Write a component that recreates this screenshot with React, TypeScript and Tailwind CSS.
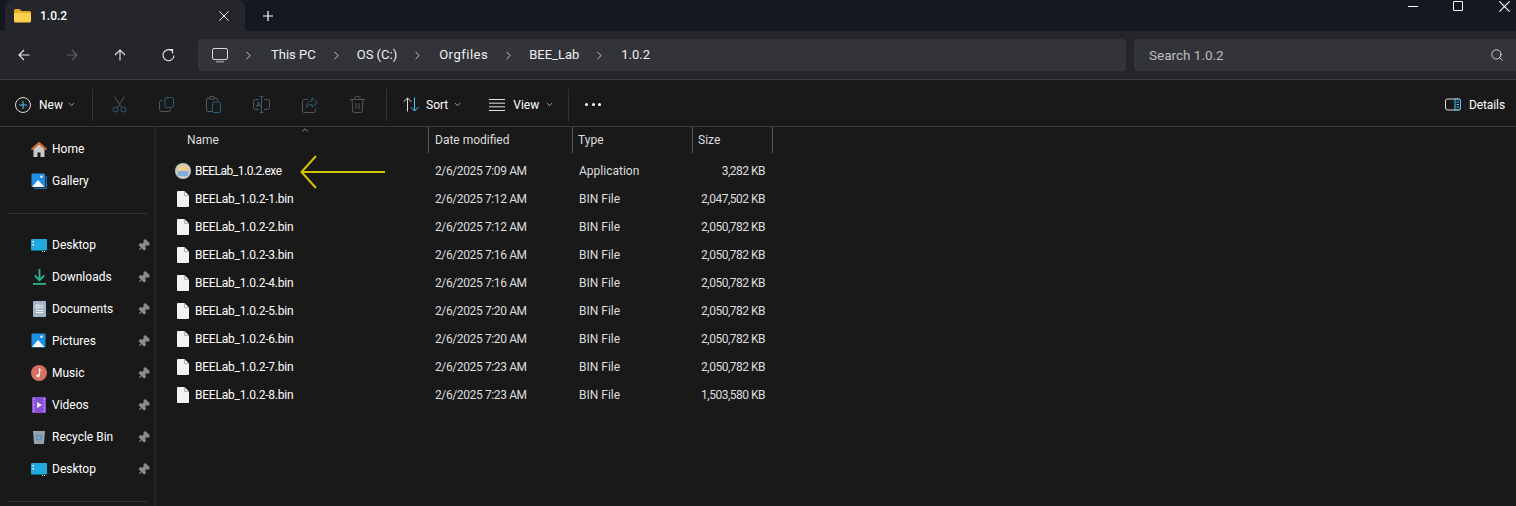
import { ChevronDown, ChevronRight, ChevronUp, Search, Pin } from 'lucide-react'

const files = [
  { name: 'BEELab_1.0.2.exe', date: '2/6/2025 7:09 AM', type: 'Application', size: '3,282 KB', exe: true },
  { name: 'BEELab_1.0.2-1.bin', date: '2/6/2025 7:12 AM', type: 'BIN File', size: '2,047,502 KB' },
  { name: 'BEELab_1.0.2-2.bin', date: '2/6/2025 7:12 AM', type: 'BIN File', size: '2,050,782 KB' },
  { name: 'BEELab_1.0.2-3.bin', date: '2/6/2025 7:16 AM', type: 'BIN File', size: '2,050,782 KB' },
  { name: 'BEELab_1.0.2-4.bin', date: '2/6/2025 7:16 AM', type: 'BIN File', size: '2,050,782 KB' },
  { name: 'BEELab_1.0.2-5.bin', date: '2/6/2025 7:20 AM', type: 'BIN File', size: '2,050,782 KB' },
  { name: 'BEELab_1.0.2-6.bin', date: '2/6/2025 7:20 AM', type: 'BIN File', size: '2,050,782 KB' },
  { name: 'BEELab_1.0.2-7.bin', date: '2/6/2025 7:23 AM', type: 'BIN File', size: '2,050,782 KB' },
  { name: 'BEELab_1.0.2-8.bin', date: '2/6/2025 7:23 AM', type: 'BIN File', size: '1,503,580 KB' },
]

const GRAY = '#55575a'
const BLUE = '#2b5f80'

function FolderIcon() {
  return (
    <svg width="17" height="15" viewBox="0 0 17 15">
      <path d="M0 2.5A1.5 1.5 0 0 1 1.5 1h4l2 2h8A1.5 1.5 0 0 1 17 4.5V6H0z" fill="#e8a922" />
      <path d="M0 5h17v8a1.500 1.500 0 0 1-1.500 1.500h-14A1.500 1.500 0 0 1 0 13z" fill="#fbd04f" />
    </svg>
  )
}

function HomeIcon() {
  return (
    <svg width="16" height="15" viewBox="0 0 16 15">
      <path d="M2.5 7 8 2l5.500 5v8h-4v-4.500h-3V15h-4z" fill="#c9c9c9" />
      <path d="M0.500 7.500 8 .8l7.500 6.700" fill="none" stroke="#d9691e" strokeWidth="1.800" />
    </svg>
  )
}

function PhotoIcon({ stack }: { stack?: boolean }) {
  return (
    <svg width="16" height="16" viewBox="0 0 16 16">
      {stack && <path d="M3 15.500h11.500a1 1 0 0 0 1-1V3" fill="none" stroke="#1f6fb8" strokeWidth="1.500" />}
      <rect x="0.500" y="0.500" width={stack ? 13.500 : 14} height={stack ? 13.500 : 14} rx="1" fill="#1e8fe0" />
      <path d="M1 14 7 7l6.500 7z" fill="#f4f7fa" />
      <circle cx="10.500" cy="3.800" r="1.200" fill="#f4f7fa" />
    </svg>
  )
}

function DesktopIcon() {
  return (
    <svg width="16" height="13" viewBox="0 0 16 13">
      <rect width="16" height="11.500" rx="1" fill="#1fa9dc" />
      <rect x="1.500" y="2" width="1.500" height="1.500" fill="#e8f6fc" />
      <rect x="1.500" y="5" width="1.500" height="1.500" fill="#e8f6fc" />
      <rect x="11" y="12" width="1" height="1" fill="#c5d9e2" />
      <rect x="13" y="12" width="1" height="1" fill="#c5d9e2" />
    </svg>
  )
}

function DownloadIcon() {
  return (
    <svg width="13" height="16" viewBox="0 0 13 16">
      <path d="M6.500 0v11M1.800 6.500l4.700 4.700 4.700-4.700" fill="none" stroke="#27b591" strokeWidth="1.800" />
      <rect y="14" width="13" height="1.800" fill="#27b591" />
    </svg>
  )
}

function DocumentsIcon() {
  return (
    <svg width="13" height="16" viewBox="0 0 13 16">
      <rect width="13" height="16" rx="1" fill="#a3b4c9" />
      <path d="M3 4h3v3H3zM7.500 4.500H10M7.500 6.500H10M3 9.500h7M3 11.500h7" stroke="#f1f4f7" fill="none" />
    </svg>
  )
}

function MusicIcon() {
  return (
    <svg width="16" height="16" viewBox="0 0 16 16">
      <circle cx="8" cy="8" r="8" fill="#d5705f" />
      <path d="M8.500 3.500v6.800" stroke="#f8ecea" strokeWidth="1.300" />
      <path d="M8.500 3.500c.4 1.300 1.400 1.700 2.200 2.200" stroke="#f8ecea" fill="none" />
      <circle cx="7" cy="10.700" r="1.800" fill="#f8ecea" />
    </svg>
  )
}

function VideosIcon() {
  return (
    <svg width="14" height="16" viewBox="0 0 14 16">
      <rect width="14" height="16" rx="1" fill="#8a4fd8" />
      <path d="M5 5v6l5-3z" fill="#efe6fb" />
      <path d="M1 2h1.500M1 5h1.500M1 8h1.500M1 11h1.500M1 14h1.500M11.500 2H13M11.500 5H13M11.500 8H13M11.500 11H13M11.500 14H13" stroke="#d9c6f5" />
    </svg>
  )
}

function RecycleIcon() {
  return (
    <svg width="12" height="14" viewBox="0 0 12 14">
      <path d="M0 1h12l-1 13H1z" fill="#9aa1a8" />
      <circle cx="6" cy="7.500" r="2.500" fill="none" stroke="#2f94d8" strokeWidth="1.500" strokeDasharray="3 1" />
    </svg>
  )
}

function BinFileIcon() {
  return (
    <svg width="12" height="16" viewBox="0 0 12 16">
      <path d="M1 0h6.500L12 4.500V15a1 1 0 0 1-1 1H1a1 1 0 0 1-1-1V1a1 1 0 0 1 1-1z" fill="#f2f2f2" />
      <path d="M7.500 0v4.500H12" fill="none" stroke="#9a9a9a" strokeWidth="0.700" />
    </svg>
  )
}

function ExeIcon() {
  return (
    <div className="w-[16px] h-[16px] rounded-full bg-[#c9c7c1] flex items-center justify-center">
      <svg width="10" height="10" viewBox="0 0 10 10">
        <rect width="10" height="5" fill="#e9cf8a" />
        <rect y="5" width="10" height="5" fill="#7fb0d9" />
      </svg>
    </div>
  )
}

function CutIcon() {
  return (
    <svg width="15" height="17" viewBox="0 0 15 17" fill="none">
      <path d="M2.500 0.500 9.500 11.500M12.500 0.500 5.500 11.500" stroke={GRAY} />
      <circle cx="3.500" cy="13.500" r="2.500" stroke={BLUE} />
      <circle cx="11.500" cy="13.500" r="2.500" stroke={BLUE} />
    </svg>
  )
}

function CopyIcon() {
  return (
    <svg width="15" height="15" viewBox="0 0 15 15" fill="none">
      <path d="M3.500 3.500h-1a2 2 0 0 0-2 2v7a2 2 0 0 0 2 2h7a2 2 0 0 0 2-2v-1" stroke={GRAY} />
      <rect x="6" y="0.500" width="8.500" height="10" rx="2" stroke={BLUE} />
    </svg>
  )
}

function PasteIcon() {
  return (
    <svg width="15" height="17" viewBox="0 0 15 17" fill="none">
      <path d="M6 15.500H2a1.500 1.500 0 0 1-1.500-1.500V3.500A1.500 1.500 0 0 1 2 2h1.500M9 2h1a1.500 1.500 0 0 1 1.500 1.500V5M3.500 3V1.500a1 1 0 0 1 1-1h3a1 1 0 0 1 1 1V3z" stroke={GRAY} />
      <rect x="6.500" y="6" width="8" height="10.500" rx="1.500" stroke={BLUE} />
    </svg>
  )
}

function RenameIcon() {
  return (
    <svg width="17" height="17" viewBox="0 0 17 17" fill="none">
      <path d="M6 3.500H2.500a2 2 0 0 0-2 2v6a2 2 0 0 0 2 2H6M11 3.500h3.500a2 2 0 0 1 2 2v6a2 2 0 0 1-2 2H11" stroke={GRAY} />
      <path d="M6.500 0.500h4M6.500 16.500h4M8.500 0.500v16" stroke={BLUE} />
      <path d="M3.500 11 5.500 6 7.500 11M4.200 9.500h2.600" stroke={GRAY} />
    </svg>
  )
}

function ShareIcon() {
  return (
    <svg width="16" height="16" viewBox="0 0 16 16" fill="none">
      <path d="M6 2.500H2.500a2 2 0 0 0-2 2v9a2 2 0 0 0 2 2h9a2 2 0 0 0 2-2v-2" stroke={GRAY} />
      <path d="M10 0.800 15.300 5.500 10 10V7.500c-2.500 0-4 .6-5.500 3 0-4 2-6.500 5.500-6.500z" stroke={BLUE} />
    </svg>
  )
}

function DeleteIcon() {
  return (
    <svg width="15" height="17" viewBox="0 0 15 17" fill="none">
      <path d="M0 3.500h15M5 3.500V2a1.500 1.500 0 0 1 1.500-1.500h2A1.500 1.500 0 0 1 10 2v1.500M2 3.500l.7 11.500a1.500 1.500 0 0 0 1.500 1.500h6.600a1.500 1.500 0 0 0 1.500-1.500L13 3.500M6 7v6M9 7v6" stroke={GRAY} />
    </svg>
  )
}

function NavArrow({ rot, color = '#e8e8e8' }: { rot: string; color?: string }) {
  return (
    <svg width="12" height="12" viewBox="0 0 12 12" fill="none" className={rot}>
      <path d="M6 11.500V1M1 6l5-5 5 5" stroke={color} strokeWidth="1.100" />
    </svg>
  )
}

function RefreshIcon() {
  return (
    <svg width="13" height="13" viewBox="0 0 13 13" fill="none">
      <path d="M9.800 1.800A5.500 5.500 0 1 0 12 6.500" stroke="#e8e8e8" strokeWidth="1.100" />
      <path d="M6.500 .5h4V4.500" stroke="#e8e8e8" strokeWidth="1.100" />
    </svg>
  )
}

function PcIcon() {
  return (
    <svg width="16" height="15" viewBox="0 0 16 15" fill="none">
      <rect x="0.500" y="0.500" width="15" height="11" rx="1.500" stroke="#d8d8d8" />
      <path d="M4 13h8v1.500H4z" fill="#8f8f8f" />
      <path d="M6 12h1M9 12h1" stroke="#a8a8a8" />
    </svg>
  )
}

function SortIcon() {
  return (
    <svg width="16" height="15" viewBox="0 0 16 15" fill="none">
      <path d="M4.500 14.500V1M.7 4.800 4.500 1l3.800 3.800" stroke="#dcdcdc" />
      <path d="M11.500.5v13.500M7.700 10.200 11.500 14l3.800-3.800" stroke="#4cc2ff" />
    </svg>
  )
}

function ViewIcon() {
  return (
    <svg width="16" height="12" viewBox="0 0 16 12" fill="none">
      <path d="M0 .5h16M0 4.200h16M0 7.800h16M0 11.500h16" stroke="#e0e0e0" />
    </svg>
  )
}

function DetailsIcon() {
  return (
    <svg width="16" height="13" viewBox="0 0 16 13" fill="none">
      <rect x="0.500" y="1" width="15" height="11" rx="2" stroke="#dcdcdc" />
      <path d="M10 1h3.500a2 2 0 0 1 2 2v7a2 2 0 0 1-2 2H10z" stroke="#4cc2ff" />
      <path d="M11.500 4h2.500M11.500 6.500h2.500M11.500 9h2.500" stroke="#4cc2ff" />
    </svg>
  )
}

function Cross({ size, color }: { size: number; color: string }) {
  return (
    <svg width={size} height={size} viewBox="0 0 10 10" fill="none">
      <path d="M.3.300l9.400 9.400M9.700.300.300 9.700" stroke={color} strokeWidth="1" />
    </svg>
  )
}

function PlusMark({ size, color, width = 1.2 }: { size: number; color: string; width?: number }) {
  return (
    <svg width={size} height={size} viewBox="0 0 10 10" fill="none">
      <path d="M5 0v10M0 5h10" stroke={color} strokeWidth={width} />
    </svg>
  )
}

const navItems = [
  { label: 'Desktop', icon: <DesktopIcon /> },
  { label: 'Downloads', icon: <DownloadIcon /> },
  { label: 'Documents', icon: <DocumentsIcon /> },
  { label: 'Pictures', icon: <PhotoIcon /> },
  { label: 'Music', icon: <MusicIcon /> },
  { label: 'Videos', icon: <VideosIcon /> },
  { label: 'Recycle Bin', icon: <RecycleIcon /> },
  { label: 'Desktop', icon: <DesktopIcon /> },
]

function SideRow({ label, icon, pinned }: { label: string; icon: React.ReactNode; pinned?: boolean }) {
  return (
    <div className="h-[32px] flex items-center pl-[31px] pr-[4px] text-[12px] text-white">
      <div className="w-[16px] flex justify-center shrink-0">{icon}</div>
      <span className="ml-[5px] flex-1">{label}</span>
      {pinned && <Pin size={13} className="text-[#8b8b8b] fill-[#8b8b8b] rotate-45" />}
    </div>
  )
}

function Crumb({ text, cls }: { text: string; cls: string }) {
  return (
    <>
      <ChevronRight size={13} strokeWidth={1.5} className="text-[#e6e6e6] shrink-0" />
      <span className={cls}>{text}</span>
    </>
  )
}

export default function App() {
  return (
    <div className="relative w-[1516px] h-[506px] overflow-hidden bg-[#191919] text-white font-['Roboto','Noto_Sans',sans-serif] flex flex-col">
      <div className="h-[31px] bg-[#131821] flex items-end shrink-0">
        <div className="ml-[5px] w-[240px] h-[31px] rounded-t-lg bg-[#24262b] flex items-center pl-[9px] pr-[16px] text-[12px] font-medium">
          <FolderIcon />
          <span className="ml-[9px] flex-1">1.0.2</span>
          <Cross size={10} color="#eeeeee" />
        </div>
        <div className="h-[31px] flex items-center ml-[18px]">
          <PlusMark size={10} color="#ffffff" />
        </div>
        <div className="flex-1 h-[31px] flex items-start justify-end text-white">
          <div className="w-[46px] h-[12px] flex items-center justify-center mr-[17px]"><div className="w-[10px] h-px bg-white" /></div>
          <div className="w-[10px] h-[10px] border border-white rounded-[1px] mr-[36px] mt-px" />
          <div className="mt-px mr-[6px]"><Cross size={11} color="#ffffff" /></div>
        </div>
      </div>

      <div className="h-[49px] bg-[#24262b] border-b border-[#3e3e3e] flex items-center shrink-0">
        <div className="flex items-center pl-[18px] w-[198px] gap-[36px]">
          <NavArrow rot="-rotate-90" />
          <NavArrow rot="rotate-90" color="#5d5f63" />
          <NavArrow rot="" />
          <RefreshIcon />
        </div>
        <div className="w-[928px] h-[32px] rounded-[4px] bg-[#32343a] flex items-center pl-[14px] gap-[14px] text-[13px] text-[#f0f0f0]">
          <PcIcon />
          <Crumb text="This PC" cls="ml-[2px]" />
          <Crumb text="OS (C:)" cls="" />
          <Crumb text="Orgfiles" cls="ml-[1px] tracking-[0.5px]" />
          <Crumb text="BEE_Lab" cls="" />
          <Crumb text="1.0.2" cls="ml-[1px]" />
        </div>
        <div className="ml-[8px] flex-1 h-[32px] rounded-l-[4px] bg-[#32343a] flex items-center justify-between pl-[15px] pr-[12px] text-[13.5px] text-[#bdbdbd]">
          <span>Search 1.0.2</span>
          <Search size={14} strokeWidth={1.5} className="text-[#e6e6e6]" />
        </div>
      </div>

      <div className="h-[47px] border-b border-[#3a3a3a] flex items-center text-[12px] shrink-0 pt-[3px]">
        <div className="flex items-center pl-[15px] w-[92px]">
          <div className="w-[16px] h-[16px] rounded-full border border-[#dcdcdc] flex items-center justify-center">
            <PlusMark size={8} color="#4cc2ff" width={1.3} />
          </div>
          <span className="ml-[8px]">New</span>
          <ChevronDown size={9} className="ml-[4px] text-[#cfcfcf]" />
        </div>
        <div className="w-px h-[32px] bg-[#333333]" />
        <div className="flex items-center gap-[32px] pl-[19px] w-[293px]">
          <CutIcon />
          <CopyIcon />
          <PasteIcon />
          <RenameIcon />
          <ShareIcon />
          <DeleteIcon />
        </div>
        <div className="w-px h-[32px] bg-[#333333]" />
        <div className="flex items-center pl-[16px]">
          <SortIcon />
          <span className="ml-[7px]">Sort</span>
          <ChevronDown size={9} className="ml-[5px] text-[#cfcfcf]" />
          <div className="ml-[27px]"><ViewIcon /></div>
          <span className="ml-[8px]">View</span>
          <ChevronDown size={9} className="ml-[6px] text-[#cfcfcf]" />
          <div className="w-px h-[32px] bg-[#333333] ml-[14px]" />
          <div className="flex gap-[3.5px] ml-[16px]">
            <div className="w-[3px] h-[3px] rounded-full bg-white" />
            <div className="w-[3px] h-[3px] rounded-full bg-white" />
            <div className="w-[3px] h-[3px] rounded-full bg-white" />
          </div>
        </div>
        <div className="ml-auto flex items-center pr-[11px]">
          <DetailsIcon />
          <span className="ml-[8px] tracking-[-0.1px]">Details</span>
        </div>
      </div>

      <div className="flex flex-1 min-h-0">
        <aside className="w-[156px] shrink-0 border-r-2 border-[#242424] pt-[6px]">
          <SideRow label="Home" icon={<HomeIcon />} />
          <SideRow label="Gallery" icon={<PhotoIcon stack />} />
          <div className="h-px bg-[#333333] mx-[7px] my-[15.5px]" />
          {navItems.map((item, i) => (
            <SideRow key={i} label={item.label} icon={item.icon} pinned />
          ))}
          <div className="h-px bg-[#333333] mx-[7px] mt-[16px]" />
        </aside>

        <main className="flex-1 min-w-0 text-[12px]">
          <div className="relative flex h-[26px] items-center text-[#dedede]">
            <ChevronUp size={10} className="absolute left-[144px] -top-[2px] text-[#a0a0a0]" />
            <div className="w-[273px] h-full flex items-center pl-[31px] border-r border-[#555555]">Name</div>
            <div className="w-[144px] h-full flex items-center pl-[6px] border-r border-[#555555]">Date modified</div>
            <div className="w-[120px] h-full flex items-center pl-[5px] border-r border-[#555555]">Type</div>
            <div className="w-[80px] h-full flex items-center pl-[5px] border-r border-[#555555]">Size</div>
          </div>
          <div className="pt-[4px]">
            {files.map((f) => (
              <div key={f.name} className="flex h-[28px] items-center text-[#dedede]">
                <div className="w-[273px] flex items-center pl-[19px] text-white">
                  <div className="w-[16px] flex justify-center">{f.exe ? <ExeIcon /> : <BinFileIcon />}</div>
                  <span className={f.exe ? 'ml-[4px] tracking-[-0.5px]' : 'ml-[4px] tracking-[-0.22px]'}>{f.name}</span>
                </div>
                <div className="w-[144px] pl-[6px] tracking-[-0.38px]">{f.date}</div>
                <div className="w-[120px] pl-[6px]">{f.type}</div>
                <div className="w-[80px] pr-[8px] text-right whitespace-nowrap tracking-[-0.5px]">{f.size}</div>
              </div>
            ))}
          </div>
        </main>
      </div>

      <svg className="absolute left-[298px] top-[153px]" width="90" height="38" viewBox="0 0 90 38" fill="none">
        <path d="M3.500 19h83.500M18 3 3.500 19 18 35" stroke="#d4c400" strokeWidth="2" />
      </svg>
    </div>
  )
}
